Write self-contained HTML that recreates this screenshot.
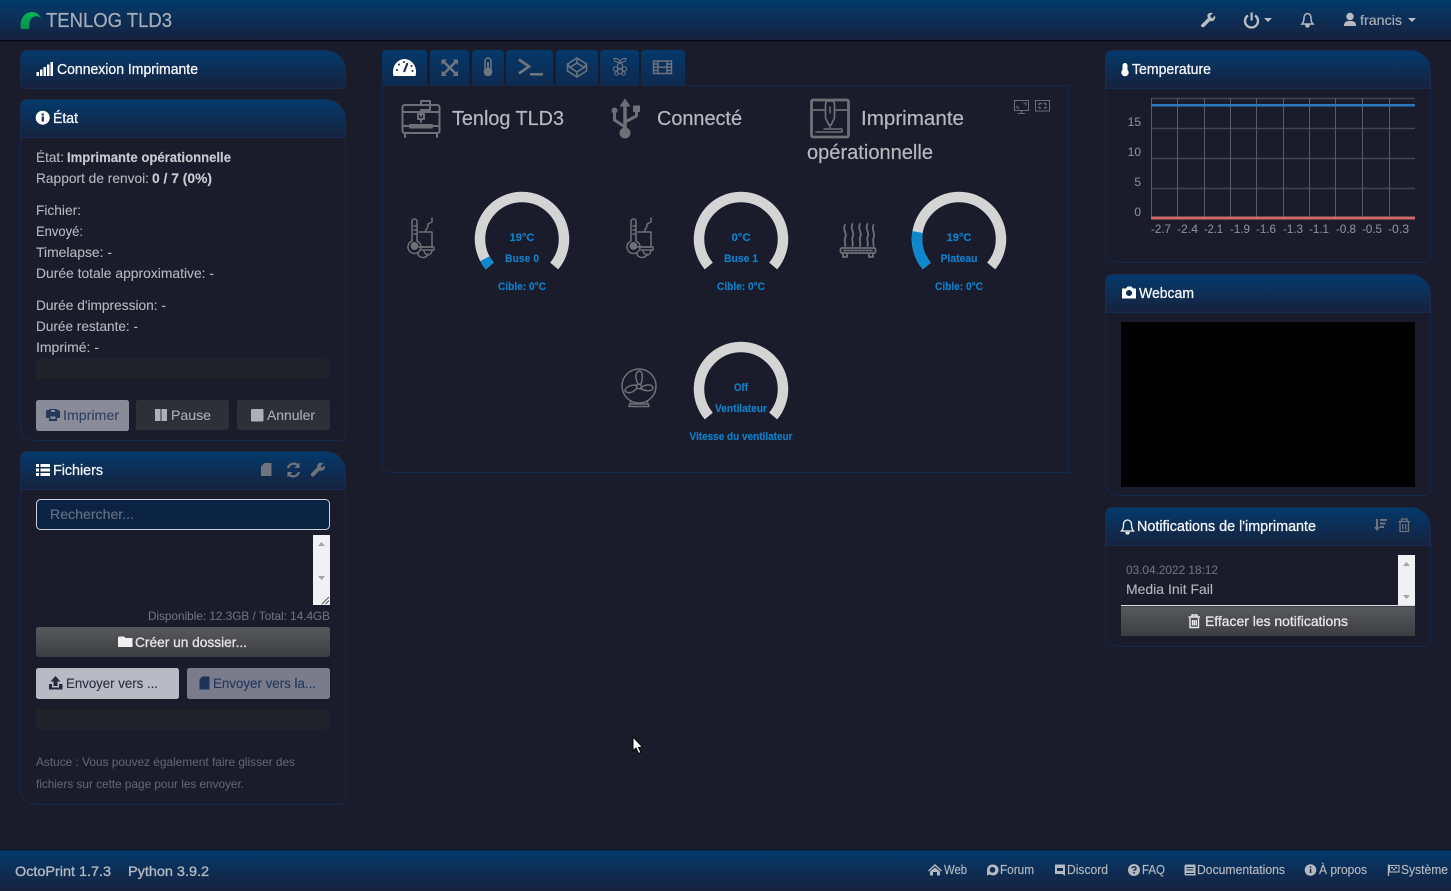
<!DOCTYPE html>
<html lang="fr"><head><meta charset="utf-8"><title>TENLOG TLD3 - OctoPrint</title>
<style>
html,body{margin:0;padding:0;background:#1a1b2b;width:1451px;height:891px;overflow:hidden}
svg{display:block}
text{font-family:"Liberation Sans",sans-serif;font-size:14px;fill:#b4b7bd;stroke:#b4b7bd;stroke-width:.12}
.h{fill:#f2f4f7;stroke:#f2f4f7;stroke-width:.3;font-size:14.5px}
.b{fill:#c8cacf;stroke:#c8cacf;stroke-width:.15;font-weight:bold}
.s{font-size:12px;fill:#6d707c;stroke:#6d707c;stroke-width:.1}
.t{font-size:20px;fill:#b6b8be;stroke:#b6b8be;stroke-width:.2}
.g{font-size:11px;font-weight:bold;fill:#0f80c8;stroke:#0f80c8;stroke-width:.15;text-anchor:middle}
.c{font-size:12px;fill:#8b8e98;stroke:#8b8e98;stroke-width:.08}
.f{font-size:12.5px;fill:#b3b8c1;stroke:#b3b8c1;stroke-width:.15}
.pb{fill:#1a1b2b;stroke:#13294b;stroke-width:1}
.ph{fill:url(#hg);stroke:#172c4e;stroke-width:1}
.ic{fill:none;stroke:#6e7077;stroke-width:2;stroke-linecap:round;stroke-linejoin:round}
.ti{fill:#6f757e}
.tl{fill:none;stroke:#6f757e;stroke-width:2}
.hi{fill:#6f747c}
.w{fill:#fff}
.fi{fill:#b3b8c1}
</style></head><body>
<svg width="1451" height="891" viewBox="0 0 1451 891" xmlns="http://www.w3.org/2000/svg">
<defs>
<linearGradient id="hg" x1="0" y1="0" x2="0" y2="1"><stop offset="0" stop-color="#033a6c"/><stop offset="1" stop-color="#16223e"/></linearGradient>
<linearGradient id="tg" x1="0" y1="0" x2="0" y2="1"><stop offset="0" stop-color="#04396a"/><stop offset="1" stop-color="#0f2a50"/></linearGradient>
<linearGradient id="bg" x1="0" y1="0" x2="0" y2="1"><stop offset="0" stop-color="#58595d"/><stop offset="1" stop-color="#3c3e42"/></linearGradient>
<linearGradient id="lg" x1="0" y1="0" x2="0" y2="1"><stop offset="0" stop-color="#00b35a"/><stop offset="1" stop-color="#0c8f4a"/></linearGradient>
</defs>
<rect width="1451" height="891" fill="#1a1b2b"/>

<!-- navbar -->
<rect width="1451" height="40" fill="url(#hg)"/><rect y="40" width="1451" height="1.5" fill="#060a14"/>
<path d="M21 29 C19 20 24 12 32 12 C36 12 39 14 41 18 C37 15 33 16 31 19 C29 22 30 25 29 29 Z" fill="url(#lg)"/>
<text x="46" y="27" style="font-size:20px;fill:#a8aeb9;stroke:#a8aeb9;stroke-width:.2" textLength="126" lengthAdjust="spacingAndGlyphs">TENLOG TLD3</text>
<path d="M1201 25 L1208 18 C1206 14 1209 12.500 1213 13 L1210 16 L1212 18.500 L1215 15.500 C1216 19 1213.500 22 1210 21 L1204 27 Q1201 28 1201 25 Z" fill="#b9bcc3"/>
<path d="M1248 15.500 A6.500 6.500 0 1 0 1255 15.500" fill="none" stroke="#b9bcc3" stroke-width="2.400"/><rect x="1250.500" y="12.500" width="2.200" height="8" fill="#b9bcc3"/>
<path d="M1264 18 h8 l-4 4z" fill="#b9bcc3"/>
<path d="M1302 24 C1304 22 1304 19 1304 18 C1304 15 1306 13.500 1307.500 13.500 C1309 13.500 1311 15 1311 18 C1311 19 1311 22 1313 24 Z M1306 25.500 h3 a1.500 1.500 0 0 1 -3 0Z" fill="none" stroke="#b9bcc3" stroke-width="1.400"/>
<circle cx="1350" cy="16.500" r="3.700" fill="#b9bcc3"/><path d="M1344 26 C1344 22 1346 21 1350 21 C1354 21 1356 22 1356 26Z" fill="#b9bcc3"/>
<text x="1360" y="25" textLength="42" lengthAdjust="spacingAndGlyphs" style="fill:#adb1b9">francis</text>
<path d="M1408 18 h8 l-4 4z" fill="#b9bcc3"/>

<!-- Connexion -->
<path class="ph" d="M20.500 83 Q20.500 88.500 26 88.500 H340 Q345.500 88.500 345.500 83 V70 A20 20 0 0 0 325.500 50.500 H28 Q20.500 50.500 20.500 58 Z"/>
<g class="w"><rect x="36.500" y="72" width="2.500" height="4"/><rect x="40" y="69.500" width="2.500" height="6.500"/><rect x="43.500" y="67" width="2.500" height="9"/><rect x="47" y="64.500" width="2.500" height="11.500"/><rect x="50.500" y="62" width="2.500" height="14"/></g>
<text class="h" x="57" y="74" textLength="141" lengthAdjust="spacingAndGlyphs">Connexion Imprimante</text>

<!-- Etat -->
<path class="pb" d="M20.500 106 Q20.500 99.500 28 99.500 H325 A20 20 0 0 1 345.500 120 V436 Q345.500 440.500 341 440.500 H36 Q20.500 440.500 20.500 425 Z"/>
<path class="ph" d="M20.500 137.500 V107 Q20.500 99.500 28 99.500 H325.500 A20 20 0 0 1 345.500 119.500 V137.500 Z"/>
<circle cx="42.700" cy="117.700" r="7" fill="#fff"/><rect x="41.700" y="116.500" width="2.200" height="5" fill="#15294a"/><rect x="41.700" y="113.500" width="2.200" height="2" fill="#15294a"/>
<text class="h" x="53" y="123" textLength="25" lengthAdjust="spacingAndGlyphs">État</text>
<text x="36" y="162" textLength="28" lengthAdjust="spacingAndGlyphs">État:</text>
<text class="b" x="67" y="162" textLength="164" lengthAdjust="spacingAndGlyphs">Imprimante opérationnelle</text>
<text x="36" y="183" textLength="113" lengthAdjust="spacingAndGlyphs">Rapport de renvoi:</text>
<text class="b" x="152" y="183" textLength="60" lengthAdjust="spacingAndGlyphs">0 / 7 (0%)</text>
<text x="36" y="215" textLength="45" lengthAdjust="spacingAndGlyphs">Fichier:</text>
<text x="36" y="236" textLength="47" lengthAdjust="spacingAndGlyphs">Envoyé:</text>
<text x="36" y="257" textLength="76" lengthAdjust="spacingAndGlyphs">Timelapse: -</text>
<text x="36" y="278" textLength="178" lengthAdjust="spacingAndGlyphs">Durée totale approximative: -</text>
<text x="36" y="310" textLength="130" lengthAdjust="spacingAndGlyphs">Durée d'impression: -</text>
<text x="36" y="331" textLength="102" lengthAdjust="spacingAndGlyphs">Durée restante: -</text>
<text x="36" y="352" textLength="63" lengthAdjust="spacingAndGlyphs">Imprimé: -</text>
<rect x="36" y="359" width="294" height="20" rx="3" fill="#1f2228"/>
<rect x="36" y="400" width="93" height="31" rx="2.500" fill="#898c98"/>
<rect x="136" y="400" width="93" height="30" rx="2.500" fill="#2e3038"/>
<rect x="237" y="400" width="93" height="30" rx="2.500" fill="#2e3038"/>
<path fill-rule="evenodd" d="M49 409 V410 H48 Q46 410 46 412 V418 H49 V421 H57 V418 H60 V412 Q60 410 58 410 H57 V409 Z M51 410 H55 V412 H51 Z M50.500 416.500 H55.500 V419 H50.500 Z" fill="#22395c"/>
<text x="63" y="420" textLength="56" lengthAdjust="spacingAndGlyphs" style="fill:#2f4263;stroke:#2f4263">Imprimer</text>
<path d="M155 409 h5.500 v12 h-5.500z M161.500 409 h5.500 v12 h-5.500z" fill="#aeb0b6"/>
<text x="171" y="420" textLength="40" lengthAdjust="spacingAndGlyphs" style="fill:#a9acb2;stroke:#a9acb2">Pause</text>
<rect x="251" y="409" width="12.500" height="12.500" rx="1" fill="#aeb0b6"/>
<text x="267" y="420" textLength="48" lengthAdjust="spacingAndGlyphs" style="fill:#a9acb2;stroke:#a9acb2">Annuler</text>

<!-- Fichiers -->
<path class="pb" d="M20.500 458 Q20.500 451.500 28 451.500 H325 A20 20 0 0 1 345.500 472 V800 Q345.500 804.500 341 804.500 H36 Q20.500 804.500 20.500 789 Z"/>
<path class="ph" d="M20.500 489.500 V459 Q20.500 451.500 28 451.500 H325.500 A20 20 0 0 1 345.500 471.500 V489.500 Z"/>
<g class="w"><rect x="36" y="464" width="3" height="3"/><rect x="40.500" y="464" width="9.500" height="3"/><rect x="36" y="468.500" width="3" height="3"/><rect x="40.500" y="468.500" width="9.500" height="3"/><rect x="36" y="473" width="3" height="3"/><rect x="40.500" y="473" width="9.500" height="3"/></g>
<text class="h" x="53" y="475" textLength="50" lengthAdjust="spacingAndGlyphs">Fichiers</text>
<path class="hi" d="M264.500 463 H271.500 V476 H261 V466.500 Z"/>
<path d="M288 468 A6 6 0 0 1 298.500 466 M299 472 A6 6 0 0 1 288.500 474" fill="none" stroke="#6f747c" stroke-width="2.200"/><path class="hi" d="M299.500 462.500 V468 H294.500Z M287.500 477.500 V472 H292.500Z"/>
<path class="hi" d="M311 473.500 L317.500 467 C316.500 463.500 319.500 462 323.500 463 L320.500 466 L322 468 L325 465.500 C325.500 469 323 471.500 319.500 470.500 L313.500 476.500 Q310.500 477 311 473.500 Z"/>
<rect x="36.500" y="499.500" width="293" height="30" rx="4" fill="#0b2444" stroke="#cfd2d8"/>
<text x="50" y="519" textLength="84" lengthAdjust="spacingAndGlyphs" style="fill:#677182;stroke:#677182">Rechercher...</text>
<rect x="313" y="535" width="17" height="70" fill="#f1f1f3"/>
<path d="M318 546 h7 l-3.500 -4z M318 576 h7 l-3.500 4z" fill="#a3a3a3"/>
<path d="M329 597 l-7 7 M329 600.500 l-3.500 3.500" stroke="#555" stroke-width="1"/>
<text class="s" x="148" y="620" textLength="182" lengthAdjust="spacingAndGlyphs">Disponible: 12.3GB / Total: 14.4GB</text>
<rect x="36" y="627" width="294" height="30" rx="2.500" fill="url(#bg)"/>
<path d="M118 638 Q118 636.500 119.500 636.500 H124 L125.500 638 H132.500 V647 H118 Z" fill="#f0f0f0"/>
<text x="135" y="647" textLength="112" lengthAdjust="spacingAndGlyphs" style="fill:#e6e6e8;stroke:#e6e6e8;stroke-width:.3">Créer un dossier...</text>
<rect x="36" y="668" width="143" height="31" rx="2.500" fill="#b8bac4"/>
<path d="M55.500 676 L60.500 681.500 H57.500 V686 H53.500 V681.500 H50.500 Z M49 684 H52 V687.500 H59 V684 H62.500 V689.500 H49 Z" fill="#262a3e"/>
<text x="66" y="688" textLength="92" lengthAdjust="spacingAndGlyphs" style="fill:#2b2f42;stroke:#2b2f42">Envoyer vers ...</text>
<rect x="187" y="668" width="143" height="31" rx="2.500" fill="#7a7c8c"/>
<path d="M202 676.500 H209.500 V689.500 H199.500 V679.500 Z" fill="#1c3558"/>
<text x="213" y="688" textLength="103" lengthAdjust="spacingAndGlyphs" style="fill:#20375a;stroke:#20375a">Envoyer vers la...</text>
<rect x="36" y="709" width="294" height="20" rx="3" fill="#1f2228"/>
<text class="s" x="36" y="766" textLength="259" lengthAdjust="spacingAndGlyphs" style="fill:#5f626f;stroke:#5f626f">Astuce : Vous pouvez également faire glisser des</text>
<text class="s" x="36" y="788" textLength="208" lengthAdjust="spacingAndGlyphs" style="fill:#5f626f;stroke:#5f626f">fichiers sur cette page pour les envoyer.</text>

<!-- Tabs -->
<g fill="url(#tg)">
<path d="M382 85 V54 Q382 50 386 50 H423 Q427 50 427 54 V85Z"/>
<path d="M430 85 V54 Q430 50 434 50 H465 Q469 50 469 54 V85Z"/>
<path d="M472 85 V54 Q472 50 476 50 H500 Q504 50 504 54 V85Z"/>
<path d="M506 85 V54 Q506 50 510 50 H549 Q553 50 553 54 V85Z"/>
<path d="M556 85 V54 Q556 50 560 50 H594 Q598 50 598 54 V85Z"/>
<path d="M600 85 V54 Q600 50 604 50 H635 Q639 50 639 54 V85Z"/>
<path d="M641 85 V54 Q641 50 645 50 H681 Q685 50 685 54 V85Z"/>
</g>
<!-- main panel -->
<path d="M382.500 85.500 H1068.500 V472.500 H392 Q382.500 472.500 382.500 463 Z" fill="#1a1b2b" stroke="#13294b"/>
<path d="M393.500 76 C391 66 398 59 404.500 59 C411 59 418 66 415.500 76 Z" fill="#fff"/>
<path d="M404 72 L407.500 63" stroke="#15294a" stroke-width="2"/><circle cx="397" cy="70" r="1" fill="#15294a"/><circle cx="399" cy="64.500" r="1" fill="#15294a"/><circle cx="404" cy="62" r="1" fill="#15294a"/><circle cx="411.500" cy="66" r="1" fill="#15294a"/><circle cx="412.500" cy="71" r="1" fill="#15294a"/>
<path class="tl" style="stroke-width:2.600" d="M443.500 61.500 L456 74 M456 61.500 L443.500 74"/><path class="ti" d="M441.500 59.500 H447 L441.500 65Z M458 59.500 H452.500 L458 65Z M441.500 76 H447 L441.500 70.500Z M458 76 H452.500 L458 70.500Z"/>
<rect x="485" y="58" width="6" height="14" rx="3" fill="none" stroke="#6f757e" stroke-width="1.500"/><circle cx="488" cy="72" r="4.300" class="ti"/><rect x="487" y="62" width="2" height="10" class="ti"/>
<path class="tl" style="stroke-width:2.800" d="M519 59.500 L529 66.500 L519 73.500"/><rect x="530" y="73" width="13" height="2.600" class="ti"/>
<path class="tl" d="M577 58 L586.500 64 V71 L577 77 L567.500 71 V64 Z M577 63 L570 67.500 L577 72 L584 67.500 Z M577 58 V63 M577 77 V72 M567.500 64 L570 67.500 M586.500 64 L584 67.500" style="stroke-width:1.500"/>
<g class="tl" style="stroke-width:1"><circle cx="620" cy="66" r="2.700"/><circle cx="615.500" cy="69" r="2.200"/><circle cx="624.500" cy="69" r="2.200"/><circle cx="620" cy="71.500" r="2.400"/><circle cx="616.500" cy="73.500" r="1.800"/><circle cx="623.500" cy="73.500" r="1.800"/><path d="M614 58.500 C616 58 619 59 620 61.500 C621 59 624 58 626 58.500 C626 61 624 62.500 620 62.500 C616 62.500 614 61 614 58.500Z"/></g>
<path class="tl" style="stroke-width:1.400" d="M653.500 61 H671.500 V73.500 H653.500 Z M658 61 V73.500 M667 61 V73.500 M658 67.200 H667 M653.500 64 H658 M653.500 67.200 H658 M653.500 70.400 H658 M667 64 H671.500 M667 67.200 H671.500 M667 70.400 H671.500"/>

<!-- state icons -->
<g class="ic" style="stroke-width:2">
<rect x="402.500" y="105" width="37" height="28" rx="2"/><path d="M402.500 112 H439.500 M402.500 126 H439.500 M405 133 V137 M437 133 V137"/><path d="M421 105 V101 H430 V110 H421 V116"/><rect x="418" y="114" width="6" height="5"/><path d="M421 119 V122"/><rect x="410" y="125" width="22" height="2.500" fill="#6e7077"/>
</g>
<text class="t" x="452" y="125" textLength="112" lengthAdjust="spacingAndGlyphs">Tenlog TLD3</text>
<g>
<path d="M625 104 V130" stroke="#6e7077" stroke-width="3.500"/><path d="M625 98.500 L630.500 106.500 H619.500Z" fill="#6e7077"/><circle cx="625" cy="133" r="5.500" fill="#6e7077"/>
<path d="M625 127 L614.500 120 V112" fill="none" stroke="#6e7077" stroke-width="3"/><path d="M625 122 L636.500 116 V110" fill="none" stroke="#6e7077" stroke-width="3"/><circle cx="614.500" cy="110.500" r="3" fill="#6e7077"/><rect x="633" y="105.500" width="7" height="6.500" fill="#6e7077"/>
</g>
<text class="t" x="657" y="125" textLength="85" lengthAdjust="spacingAndGlyphs">Connecté</text>
<g class="ic">
<rect x="811.500" y="100" width="37" height="37" rx="1.500" style="stroke-width:2.800"/><path d="M812 110 H824 M836 110 H848" style="stroke-width:1.800"/><path d="M826.500 101 H833.500 L834.500 104 V118 L831 125 H829 L825.500 118 V104 Z" style="stroke-width:1.700"/><path d="M830 107 V113" style="stroke-width:1.500"/><path d="M830 126 V128" style="stroke-width:1.500"/><path d="M824 129 H842 V132 H816" style="stroke-width:1.600"/>
</g>
<text class="t" x="861" y="125" textLength="103" lengthAdjust="spacingAndGlyphs">Imprimante</text>
<text class="t" x="807" y="159" textLength="126" lengthAdjust="spacingAndGlyphs">opérationnelle</text>
<g fill="none" stroke="#6a6d75" stroke-width="1"><rect x="1014.500" y="100.500" width="14" height="10"/><path d="M1018 113.500 H1025 M1021.500 111 V113.500 M1017 108 L1019.500 108 M1017 108 V105.500 M1026 103 H1023.500 M1026 103 V105.500"/><rect x="1035.500" y="100.500" width="14" height="10.500"/><path d="M1039 103.500 H1042 M1039 103.500 V105 M1046 103.500 H1043.500 M1046 103.500 V105 M1039 108 V106.500 M1039 108 H1041 M1046 108 V106.500 M1046 108 H1044" stroke-width="1.400"/></g>

<!-- hotend icons -->
<g class="ic" style="stroke-width:1.500">
<path d="M412 222 Q412 219 414.500 219 Q417 219 417 222 V241 A6.500 6.500 0 1 1 412 241 Z"/><circle cx="414.500" cy="246" r="3.200" fill="#6e7077"/><path d="M417 226 H414 M417 230 H414 M417 234 H414"/>
<path d="M419 232 H432 V247 H419 M425 232 L428 226 V224 L432 222 V218"/><path d="M419 247 H434 V250 H422"/><path d="M424 250 A4 5 0 0 0 432 250"/><path d="M418 253 A5 4 0 0 0 428 254"/>
</g>
<g class="ic" style="stroke-width:1.500" transform="translate(219 0)">
<path d="M412 222 Q412 219 414.500 219 Q417 219 417 222 V241 A6.500 6.500 0 1 1 412 241 Z"/><circle cx="414.500" cy="246" r="3.200" fill="#6e7077"/><path d="M417 226 H414 M417 230 H414 M417 234 H414"/>
<path d="M419 232 H432 V247 H419 M425 232 L428 226 V224 L432 222 V218"/><path d="M419 247 H434 V250 H422"/><path d="M424 250 A4 5 0 0 0 432 250"/><path d="M418 253 A5 4 0 0 0 428 254"/>
</g>
<!-- bed -->
<g class="ic" style="stroke-width:1.800">
<path d="M845 225 C842 230 848 234 845 238 C844 241 846 244 845 246 M852.500 224 C849.500 229 855.500 233 852.500 237 C851.500 240 853.500 243 852.500 246 M860 224 C857 229 863 233 860 237 C859 240 861 243 860 246 M867.500 224 C864.500 229 870.500 233 867.500 237 C866.500 240 868.500 243 867.500 246 M873.500 225 C871 230 876 234 873.500 238 C872.500 241 874 244 873.500 246"/>
<rect x="840.500" y="248" width="35" height="5" rx="1.500"/><path d="M843 253 V257 H847 V253 M869 253 V257 H873 V253"/><path d="M844 250.500 H872" stroke-dasharray="2 1.700"/>
</g>
<!-- fan -->
<g class="ic" style="stroke-width:1.500">
<circle cx="639" cy="386" r="17"/><path d="M631 401 L629 406.500 H649 L647 401 M630 404 H648"/>
<path d="M638 384 C635 378 635 372 639 371 C643 371 643 378 641 384 Z M642 387 C647 384 652 384 653 388 C652 392 646 391 641 389 Z M637 388 C633 393 628 394 625 391 C625 387 631 385 636 385 Z"/><circle cx="639" cy="386.500" r="2.300"/>
</g>

<!-- gauges -->
<g fill="none" stroke="#d4d4d5" stroke-width="10.500">
<path d="M489.800 266 A42 42 0 1 1 554.200 266"/>
<path d="M708.800 266 A42 42 0 1 1 773.200 266"/>
<path d="M926.800 266 A42 42 0 1 1 991.200 266"/>
<path d="M708.800 416 A42 42 0 1 1 773.200 416"/>
</g>
<g fill="none" stroke="#0e88cd" stroke-width="10.500">
<path d="M489.800 266 A42 42 0 0 1 484.900 258.700"/>
<path d="M926.800 266 A42 42 0 0 1 917.600 232"/>
</g>
<g>
<text class="g" x="522" y="241" textLength="25" lengthAdjust="spacingAndGlyphs">19°C</text>
<text class="g" x="522" y="262" textLength="34" lengthAdjust="spacingAndGlyphs">Buse 0</text>
<text class="g" x="522" y="290" textLength="48" lengthAdjust="spacingAndGlyphs">Cible: 0°C</text>
<text class="g" x="741" y="241" textLength="19" lengthAdjust="spacingAndGlyphs">0°C</text>
<text class="g" x="741" y="262" textLength="34" lengthAdjust="spacingAndGlyphs">Buse 1</text>
<text class="g" x="741" y="290" textLength="48" lengthAdjust="spacingAndGlyphs">Cible: 0°C</text>
<text class="g" x="959" y="241" textLength="25" lengthAdjust="spacingAndGlyphs">19°C</text>
<text class="g" x="959" y="262" textLength="37" lengthAdjust="spacingAndGlyphs">Plateau</text>
<text class="g" x="959" y="290" textLength="48" lengthAdjust="spacingAndGlyphs">Cible: 0°C</text>
<text class="g" x="741" y="391" textLength="14" lengthAdjust="spacingAndGlyphs">Off</text>
<text class="g" x="741" y="412" textLength="52" lengthAdjust="spacingAndGlyphs">Ventilateur</text>
<text class="g" x="741" y="440" textLength="103" lengthAdjust="spacingAndGlyphs">Vitesse du ventilateur</text>
</g>

<!-- Temperature -->
<path class="pb" d="M1105.500 57 Q1105.500 50.500 1113 50.500 H1410 A20 20 0 0 1 1430.500 71 V258 Q1430.500 262.500 1426 262.500 H1121 Q1105.500 262.500 1105.500 247 Z"/>
<path class="ph" d="M1105.500 88.500 V58 Q1105.500 50.500 1113 50.500 H1410.500 A20 20 0 0 1 1430.500 70.500 V88.500 Z"/>
<rect x="1122.500" y="63" width="5" height="9" rx="2.500" fill="#fff"/><circle cx="1125" cy="72.500" r="3.700" fill="#fff"/>
<text class="h" x="1132" y="74" textLength="79" lengthAdjust="spacingAndGlyphs">Temperature</text>
<g stroke="#44434f">
<path stroke-width="1.500" d="M1151 98.500 H1415 M1151 128.500 H1415 M1151 158.500 H1415 M1151 188.500 H1415"/>
<path stroke="#5a5964" stroke-width="1" d="M1151.500 98 V218 M1177.500 98 V218 M1204.500 98 V218 M1230.500 98 V218 M1256.500 98 V218 M1283.500 98 V218 M1309.500 98 V218 M1335.500 98 V218 M1362.500 98 V218 M1389.500 98 V218"/>
</g>
<rect x="1151" y="104" width="264" height="2.500" fill="#2a78bd"/>
<rect x="1151" y="216.500" width="264" height="3" fill="#cc6a66"/>
<text class="c" x="1141" y="126" text-anchor="end">15</text><text class="c" x="1141" y="156" text-anchor="end">10</text><text class="c" x="1141" y="186" text-anchor="end">5</text><text class="c" x="1141" y="216" text-anchor="end">0</text>
<text class="c" x="1151" y="233" textLength="20" lengthAdjust="spacingAndGlyphs">-2.7</text><text class="c" x="1177" y="233" textLength="21" lengthAdjust="spacingAndGlyphs">-2.4</text><text class="c" x="1204" y="233" textLength="19" lengthAdjust="spacingAndGlyphs">-2.1</text><text class="c" x="1230" y="233" textLength="20" lengthAdjust="spacingAndGlyphs">-1.9</text><text class="c" x="1256" y="233" textLength="20" lengthAdjust="spacingAndGlyphs">-1.6</text><text class="c" x="1283" y="233" textLength="20" lengthAdjust="spacingAndGlyphs">-1.3</text><text class="c" x="1309" y="233" textLength="20" lengthAdjust="spacingAndGlyphs">-1.1</text><text class="c" x="1336" y="233" textLength="20" lengthAdjust="spacingAndGlyphs">-0.8</text><text class="c" x="1362" y="233" textLength="20" lengthAdjust="spacingAndGlyphs">-0.5</text><text class="c" x="1388" y="233" textLength="21" lengthAdjust="spacingAndGlyphs">-0.3</text>

<!-- Webcam -->
<path class="pb" d="M1105.500 281 Q1105.500 274.500 1113 274.500 H1410 A20 20 0 0 1 1430.500 295 V491 Q1430.500 495.500 1426 495.500 H1121 Q1105.500 495.500 1105.500 480 Z"/>
<path class="ph" d="M1105.500 312.500 V282 Q1105.500 274.500 1113 274.500 H1410.500 A20 20 0 0 1 1430.500 294.500 V312.500 Z"/>
<path fill-rule="evenodd" d="M1122 288.500 H1126 L1127.500 286.500 H1131.500 L1133 288.500 H1136 V298.500 H1122 Z M1129 290 A3 3 0 1 0 1129.010 290Z" fill="#fff"/>
<text class="h" x="1139" y="298" textLength="55" lengthAdjust="spacingAndGlyphs">Webcam</text>
<rect x="1121" y="322" width="294" height="165" fill="#000"/>

<!-- Notifications -->
<path class="pb" d="M1105.500 514 Q1105.500 507.500 1113 507.500 H1410 A20 20 0 0 1 1430.500 528 V642 Q1430.500 646.500 1426 646.500 H1121 Q1105.500 646.500 1105.500 631 Z"/>
<path class="ph" d="M1105.500 545.500 V515 Q1105.500 507.500 1113 507.500 H1410.500 A20 20 0 0 1 1430.500 527.500 V545.500 Z"/>
<path d="M1121.500 531 C1123.500 529 1123.500 526 1123.500 524.500 C1123.500 521.500 1125.500 520 1127.500 520 C1129.500 520 1131.500 521.500 1131.500 524.500 C1131.500 526 1131.500 529 1133.500 531 Z M1126 532.500 h3 a1.500 1.500 0 0 1 -3 0Z" fill="none" stroke="#f2f4f7" stroke-width="1.300"/>
<text class="h" x="1137" y="531" textLength="179" lengthAdjust="spacingAndGlyphs">Notifications de l'imprimante</text>
<path class="hi" d="M1376 519 H1378 V527 H1380 L1377 531 L1374 527 H1376 Z M1380 519 H1387 V521 H1380Z M1380 522.500 H1385.500 V524.500 H1380Z M1380 526 H1384 V528 H1380Z"/>
<path d="M1398.500 521.500 H1410 M1401.500 521 V519 H1407 V521 M1400 522 V531.500 H1408.500 V522 M1402.700 524 V529.500 M1405.700 524 V529.500" fill="none" stroke="#6f747c" stroke-width="1.300"/>
<text class="s" x="1126" y="574" textLength="92" lengthAdjust="spacingAndGlyphs">03.04.2022 18:12</text>
<text x="1126" y="594" textLength="87" lengthAdjust="spacingAndGlyphs">Media Init Fail</text>
<rect x="1398" y="555" width="17" height="50" fill="#f1f1f3"/>
<path d="M1403 566 h7 l-3.500 -4z M1403 595 h7 l-3.500 4z" fill="#a3a3a3"/>
<rect x="1121" y="605" width="294" height="1.200" fill="#dcdde0"/>
<rect x="1121" y="607" width="294" height="29" fill="url(#bg)"/>
<path d="M1188.500 617 H1200 M1192 616.500 V615 H1197 V616.500 M1190 618 V627.500 H1198.500 V618 M1192.500 620 V625.500 M1194.300 620 V625.500 M1196.200 620 V625.500" fill="none" stroke="#eceded" stroke-width="1.400"/>
<text x="1205" y="626" textLength="143" lengthAdjust="spacingAndGlyphs" style="fill:#e6e6e8;stroke:#e6e6e8;stroke-width:.3">Effacer les notifications</text>

<!-- Cursor -->
<path d="M633 737 V751 L636 748 L638.500 753.500 L641 752.500 L638.500 747.500 L642.500 747 Z" fill="#fff" stroke="#000" stroke-width="1"/>

<!-- Footer -->
<rect y="850" width="1451" height="41" fill="url(#hg)"/><rect y="849.500" width="1451" height="1" fill="#0b1124"/>
<text x="15" y="876" textLength="96" lengthAdjust="spacingAndGlyphs" style="fill:#b3b9c3;stroke:#b3b9c3;stroke-width:.35">OctoPrint 1.7.3</text>
<text x="128" y="876" textLength="81" lengthAdjust="spacingAndGlyphs" style="fill:#b3b9c3;stroke:#b3b9c3;stroke-width:.35">Python 3.9.2</text>
<path class="fi" d="M935 864 L942 870.500 L941 871.500 L935 866 L929 871.500 L928 870.500 Z M930 871.500 L935 867.500 L940 871.500 V875.500 H937 V872 H933 V875.500 H930 Z"/>
<text class="f" x="944" y="874" textLength="23" lengthAdjust="spacingAndGlyphs">Web</text>
<path fill-rule="evenodd" class="fi" d="M992.500 864.500 A5.500 5.500 0 1 1 990 874.500 L987 875.500 V870 A5.500 5.500 0 0 1 992.500 864.500 Z M992.500 867 A2.800 2.800 0 1 0 992.510 867Z"/>
<text class="f" x="1000" y="874" textLength="34" lengthAdjust="spacingAndGlyphs">Forum</text>
<path fill-rule="evenodd" class="fi" d="M1055 864.500 H1065 V876 L1062.500 874 H1055 Z M1057 868 V871 H1063 V868 Z"/>
<text class="f" x="1067" y="874" textLength="41" lengthAdjust="spacingAndGlyphs">Discord</text>
<circle cx="1134" cy="870" r="6" class="fi"/><path d="M1132 868.500 Q1132 866.800 1134 866.800 Q1136 866.800 1136 868.500 Q1136 869.500 1134 870.300 V871" fill="none" stroke="#14274a" stroke-width="1.300"/><rect x="1133.300" y="872" width="1.500" height="1.500" fill="#14274a"/>
<text class="f" x="1142" y="874" textLength="23" lengthAdjust="spacingAndGlyphs">FAQ</text>
<path fill-rule="evenodd" class="fi" d="M1186 864.500 H1195.500 V875.500 H1186 Q1184.500 875.500 1184.500 874 V866 Q1184.500 864.500 1186 864.500 Z M1186.500 867 V868 H1193.500 V867 Z M1186.500 869.500 V870.500 H1193.500 V869.500 Z M1186 873 V874 H1194 V873 Z"/>
<text class="f" x="1197" y="874" textLength="88" lengthAdjust="spacingAndGlyphs">Documentations</text>
<circle cx="1310.500" cy="870" r="5.800" class="fi"/><rect x="1309.800" y="869" width="1.500" height="4" fill="#14274a"/><rect x="1309.800" y="866.500" width="1.500" height="1.500" fill="#14274a"/>
<text class="f" x="1319" y="874" textLength="48" lengthAdjust="spacingAndGlyphs">À propos</text>
<path d="M1388.500 864.500 V876" stroke="#b3b8c1" stroke-width="1.300"/><rect x="1389.500" y="865.500" width="9.500" height="6.500" fill="none" stroke="#b3b8c1" stroke-width="1.100"/><path d="M1391 867 h2 v1.500 h-2z M1395 867 h2 v1.500 h-2z M1393 868.800 h2 v1.500 h-2z" fill="#b3b8c1"/>
<text class="f" x="1401" y="874" textLength="47" lengthAdjust="spacingAndGlyphs">Système</text>
</svg>
</body></html>
